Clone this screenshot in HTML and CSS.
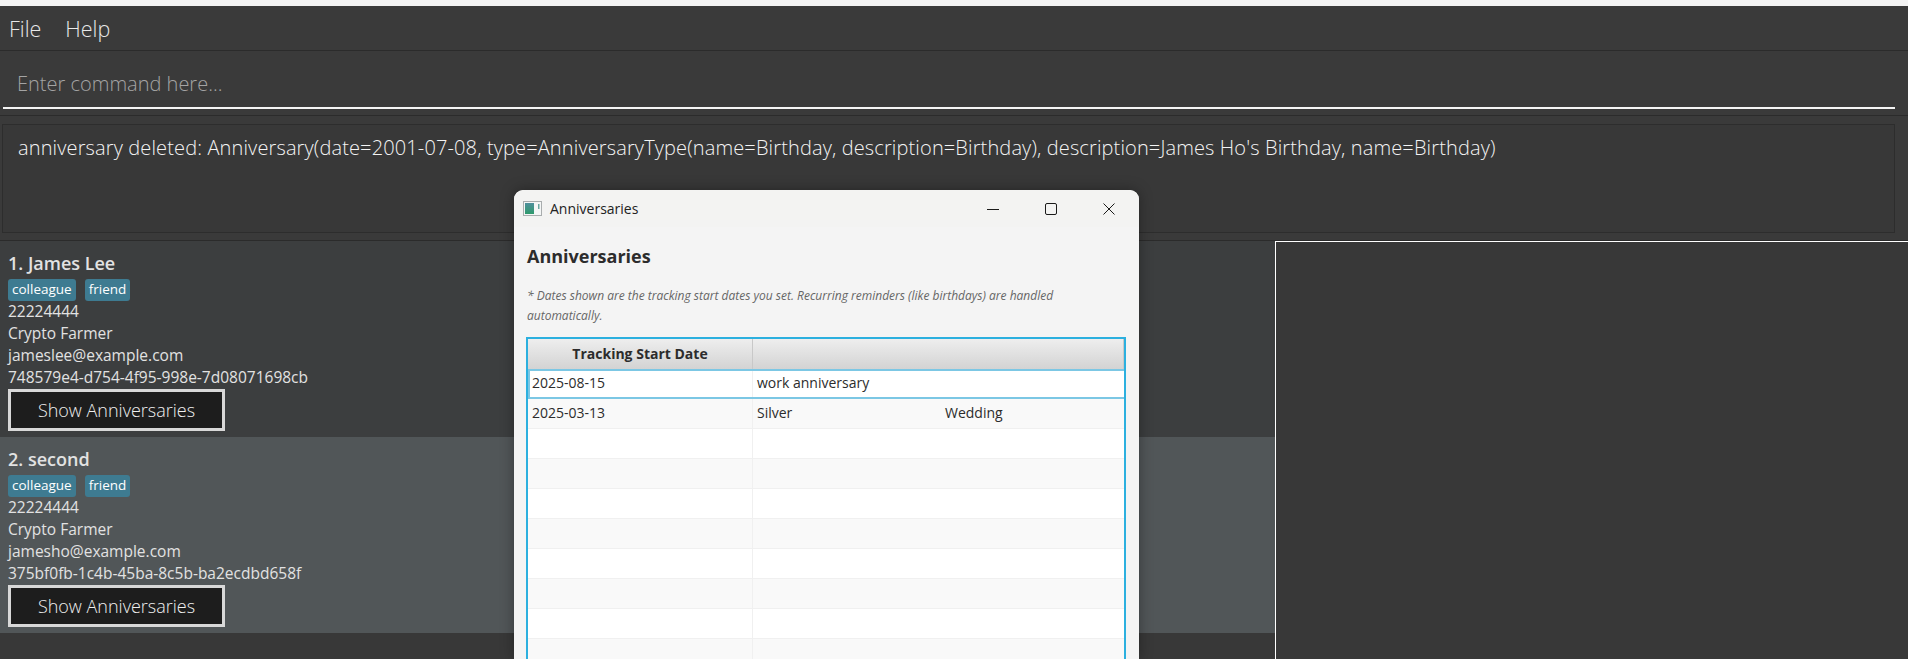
FILE: index.html
```html
<!DOCTYPE html>
<html lang="en">
  <head>
    <meta charset="UTF-8" />
    <meta name="viewport" content="width=device-width, initial-scale=1.0" />
    <title>Anniversaries</title>
    <link rel="stylesheet" href="styles.css">
  </head>
  <body>
    <div class="app">
      <div class="menubar">
        <span class="menu-item">File</span>
        <span class="menu-item">Help</span>
      </div>

      <div class="command">
        <div class="command-input">Enter command here...</div>
      </div>

      <div class="result-wrap">
        <div class="result">anniversary deleted: Anniversary(date=2001-07-08, type=AnniversaryType(name=Birthday, description=Birthday), description=James Ho's Birthday, name=Birthday)</div>
      </div>

      <div class="main">
        <div class="person-list">
          <div class="person-card">
            <div class="person-name">1. James Lee</div>
            <div class="tags">
              <span class="tag">colleague</span>
              <span class="tag">friend</span>
            </div>
            <div class="person-line">22224444</div>
            <div class="person-line">Crypto Farmer</div>
            <div class="person-line">jameslee@example.com</div>
            <div class="person-line">748579e4-d754-4f95-998e-7d08071698cb</div>
            <div class="show-button">Show Anniversaries</div>
          </div>
          <div class="person-card selected">
            <div class="person-name">2. second</div>
            <div class="tags">
              <span class="tag">colleague</span>
              <span class="tag">friend</span>
            </div>
            <div class="person-line">22224444</div>
            <div class="person-line">Crypto Farmer</div>
            <div class="person-line">jamesho@example.com</div>
            <div class="person-line">375bf0fb-1c4b-45ba-8c5b-ba2ecdbd658f</div>
            <div class="show-button">Show Anniversaries</div>
          </div>
        </div>
        <div class="side-panel"></div>
      </div>
    </div>

    <!-- floating window -->
    <div class="window">
      <div class="titlebar">
        <svg class="app-icon" width="19" height="15" viewBox="0 0 19 15">
          <defs>
            <linearGradient id="iconFill" x1="0" y1="0" x2="0" y2="1">
              <stop offset="0" stop-color="#4f8f9c" />
              <stop offset="1" stop-color="#2f9a6c" />
            </linearGradient>
          </defs>
          <rect x="0.5" y="0.5" width="18" height="14" fill="#f4f6f6" stroke="#a9adae" />
          <rect x="2" y="2" width="9" height="11" fill="url(#iconFill)" />
          <rect x="15" y="3" width="1.5" height="5" fill="#6aa6a0" />
        </svg>
        <span class="window-title">Anniversaries</span>
        <div class="window-controls">
          <svg class="control" width="12" height="12" viewBox="0 0 12 12">
            <path d="M0 6.5H12" stroke="#1a1a1a" fill="none" />
          </svg>
          <svg class="control" width="12" height="12" viewBox="0 0 12 12">
            <rect x="0.5" y="0.5" width="11" height="11" rx="1.5" stroke="#1a1a1a" fill="none" />
          </svg>
          <svg class="control" width="12" height="12" viewBox="0 0 12 12">
            <path d="M0.5 0.5L11.5 11.5M11.5 0.5L0.5 11.5" stroke="#1a1a1a" fill="none" />
          </svg>
        </div>
      </div>

      <div class="window-body">
        <h2 class="window-heading">Anniversaries</h2>
        <p class="window-note">* Dates shown are the tracking start dates you set. Recurring reminders (like birthdays) are handled automatically.</p>

        <div class="table">
          <div class="table-head">
            <div class="head-cell col-date">Tracking Start Date</div>
            <div class="head-cell col-rest"></div>
          </div>
          <div class="row focused">
            <div class="cell col-date">2025-08-15</div>
            <div class="cell col-rest">work anniversary</div>
          </div>
          <div class="row odd">
            <div class="cell col-date">2025-03-13</div>
            <div class="cell col-rest"><span class="col-name">Silver</span><span>Wedding</span></div>
          </div>
          <div class="row"><div class="cell col-date"></div><div class="cell col-rest"></div></div>
          <div class="row odd"><div class="cell col-date"></div><div class="cell col-rest"></div></div>
          <div class="row"><div class="cell col-date"></div><div class="cell col-rest"></div></div>
          <div class="row odd"><div class="cell col-date"></div><div class="cell col-rest"></div></div>
          <div class="row"><div class="cell col-date"></div><div class="cell col-rest"></div></div>
          <div class="row odd"><div class="cell col-date"></div><div class="cell col-rest"></div></div>
          <div class="row"><div class="cell col-date"></div><div class="cell col-rest"></div></div>
          <div class="row odd"><div class="cell col-date"></div><div class="cell col-rest"></div></div>
        </div>
      </div>
    </div>
  </body>
</html>
```

FILE: styles.css
```css
html,
body {
  height: 100%;
}

body {
  margin: 0;
  overflow: hidden;
  background-color: #f3f3f3;
  font-family: "Open Sans", "Noto Sans", sans-serif;
}

.app {
  display: flex;
  flex-direction: column;
  height: 100vh;
  padding-top: 6px;
  box-sizing: border-box;
  background-color: #f3f3f3;
  color: #fff;
}

.menubar {
  display: flex;
  gap: 24px;
  align-items: center;
  height: 44px;
  padding-left: 9px;
  background-color: #3a3a3a;
  border-bottom: 1px solid #2b2b2b;
  font-size: 21.5px;
  font-weight: 300;
  color: #e8e8e8;
}

.command {
  height: 64px;
  padding: 0 13px 0 3px;
  background-color: #3a3a3a;
  border-bottom: 1px solid #2b2b2b;
}

.command-input {
  box-sizing: border-box;
  height: 58px;
  padding: 19px 0 0 14px;
  border-bottom: 2px solid #f4f4f4;
  font-size: 20px;
  font-weight: 300;
  color: #a4a4a4;
}

.result-wrap {
  height: 125px;
  box-sizing: border-box;
  padding: 8px 13px 7px 2px;
  background-color: #3a3a3a;
  border-bottom: 1px solid #2b2b2b;
}

.result {
  box-sizing: border-box;
  height: 109px;
  padding: 9px 15px;
  background-color: #383838;
  border: 1px solid #2d2d2d;
  font-size: 20px;
  font-weight: 300;
  letter-spacing: 0.13px;
  color: #f4f4f4;
  white-space: nowrap;
}

.main {
  display: flex;
  flex: 1;
  background-color: #383838;
}

.person-list {
  width: 1275px;
}

.person-card {
  box-sizing: border-box;
  height: 196px;
  padding: 7px 8px 0;
  background-color: #3c3e3f;
  color: #e2e2e2;
}

.person-card.selected {
  background-color: #515658;
}

.person-name {
  height: 31px;
  font-size: 18px;
  font-weight: 600;
  line-height: 30px;
}

.tags {
  display: flex;
  gap: 9px;
  height: 22px;
}

.tag {
  padding: 0 4px;
  background-color: #3e7b91;
  border-radius: 3px;
  font-size: 13.5px;
  line-height: 21px;
  color: #fff;
}

.person-line {
  height: 22px;
  font-size: 15.5px;
  line-height: 21px;
}

.show-button {
  box-sizing: border-box;
  width: 217px;
  height: 42px;
  background-color: #1d1d1d;
  border: 3px solid #d8d8d8;
  text-align: center;
  font-size: 18px;
  font-weight: 300;
  line-height: 36px;
  color: #f0f0f0;
}

.side-panel {
  flex: 1;
  background-color: #383838;
  border-top: 1px solid #fff;
  border-left: 1px solid #fff;
}

.window {
  position: absolute;
  left: 514px;
  top: 190px;
  width: 625px;
  height: 469px;
  overflow: hidden;
  background-color: #f4f4f4;
  border-radius: 9px 9px 0 0;
  box-shadow: 0 0 14px rgba(0, 0, 0, 0.35);
  color: #222;
}

.titlebar {
  display: flex;
  align-items: center;
  height: 37px;
  padding-left: 9px;
  box-sizing: border-box;
  background-color: #f3f3f2;
  border-radius: 9px 9px 0 0;
}

.window-title {
  margin-left: 8px;
  font-size: 14px;
}

.window-controls {
  display: flex;
  gap: 46px;
  margin-left: auto;
  margin-right: 24px;
}

.control {
  display: block;
}

.window-body {
  padding: 16px 13px 0;
}

.window-heading {
  margin: 0;
  font-size: 18px;
  font-weight: 700;
  line-height: 26px;
  color: #2c2c2c;
}

.window-note {
  margin: 17px 0 0;
  font-size: 12px;
  font-style: italic;
  line-height: 20px;
  color: #666;
}

.table {
  margin: 11px 0 0 -1px;
  border: 2px solid #2cb0df;
  background-color: #fff;
  font-size: 14px;
}

.table-head {
  display: flex;
  height: 30px;
}

.head-cell {
  box-sizing: border-box;
  background: linear-gradient(#eeeeee, #d3d3d3);
  border-right: 1px solid #c8c8c8;
  text-align: center;
  font-weight: 700;
  line-height: 29px;
  color: #2c2c2c;
}

.col-date {
  width: 225px;
  flex-shrink: 0;
}

.col-rest {
  flex: 1;
}

.row {
  display: flex;
  box-sizing: border-box;
  height: 30px;
  background-color: #fff;
  border-bottom: 1px solid #f0f0f0;
}

.row.odd {
  background-color: #f9f9f9;
}

.row.focused {
  border: 2px solid #7cc7e4;
  border-right: none;
}

.cell {
  box-sizing: border-box;
  padding-left: 4px;
  line-height: 28px;
  color: #2c2c2c;
}

.row .col-date {
  border-right: 1px solid #f0f0f0;
}

.focused .cell {
  line-height: 24px;
}

.focused .col-date {
  width: 223px;
  padding-left: 2px;
}

.col-name {
  display: inline-block;
  width: 188px;
}
```
